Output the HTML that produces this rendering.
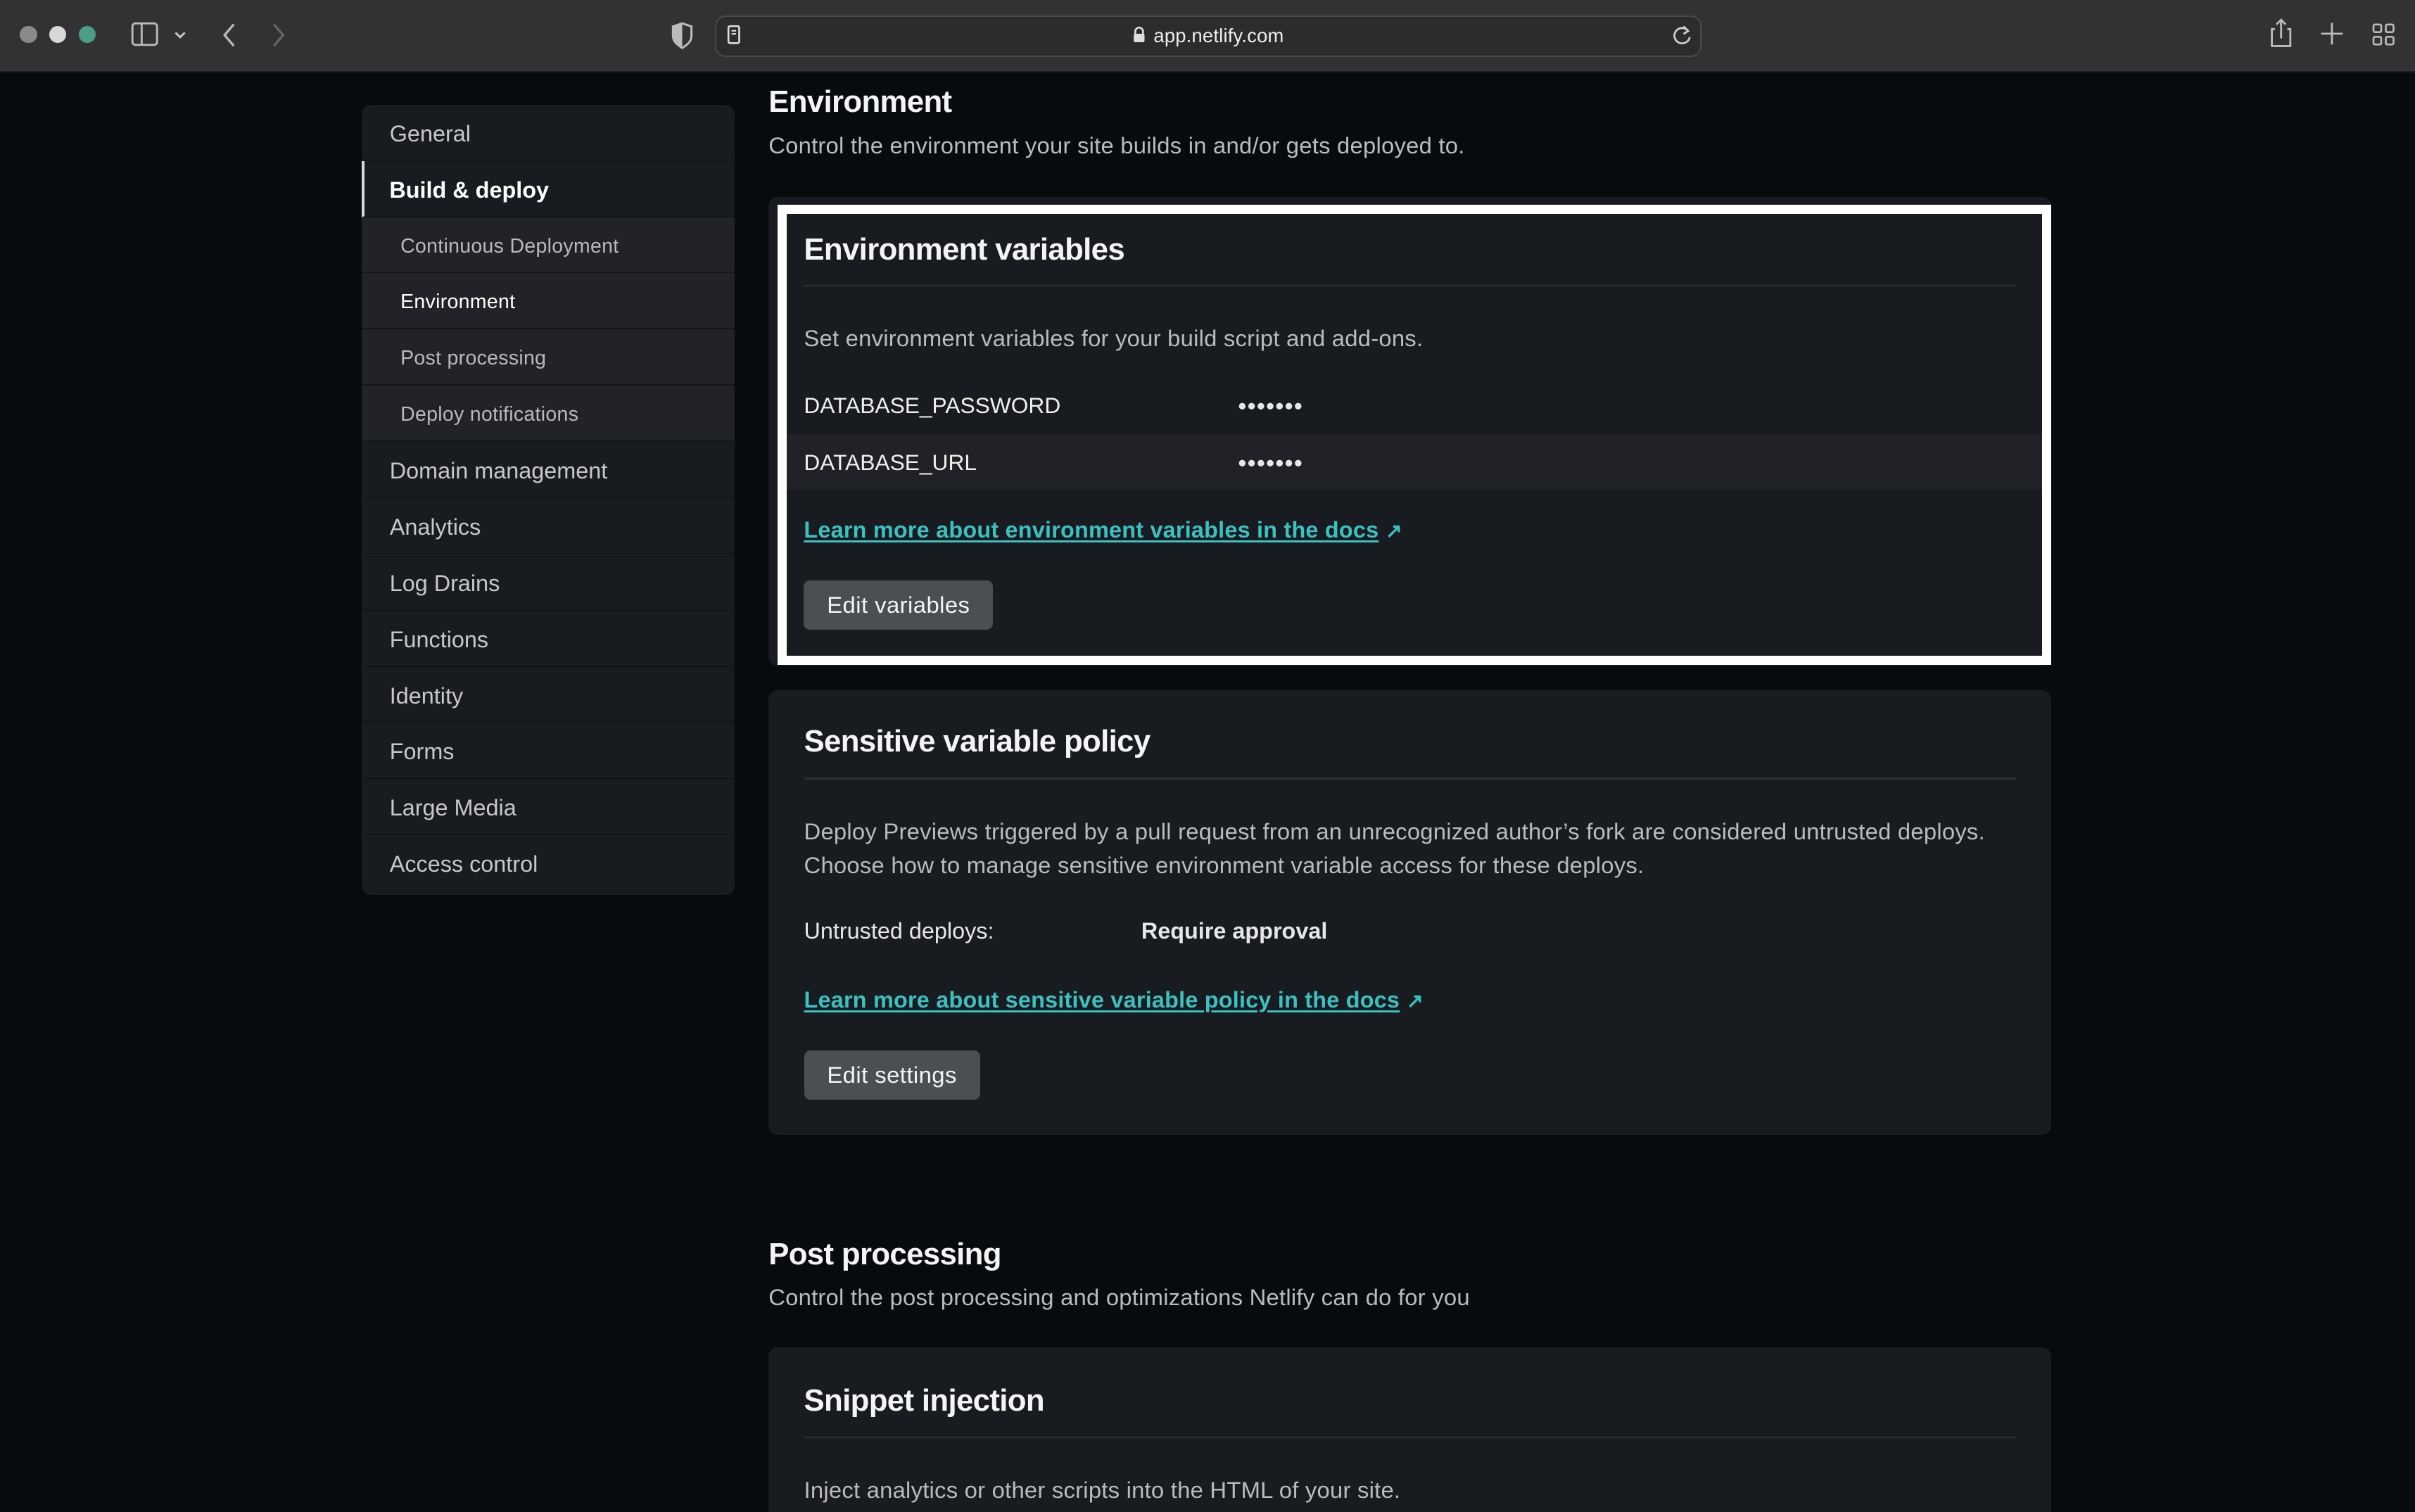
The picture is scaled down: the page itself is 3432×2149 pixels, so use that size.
<!DOCTYPE html>
<html><head><meta charset="utf-8"><style>
html,body{margin:0;padding:0;background:#070b0e;overflow:hidden;width:3432px;height:2149px}
#w{zoom:2.18878;width:1568px;height:982px;position:relative;font-family:"Liberation Sans",Arial,sans-serif;color:#e6e7e8;letter-spacing:0}
.abs{position:absolute}
.tb{left:0;top:0;width:1568px;height:46px;background:#323235;border-bottom:1px solid #1d1d1f}
.dot{width:11px;height:11px;border-radius:50%;top:17px}
.side{left:235px;top:68px;width:242px;height:513px;background:#181b20;border-radius:6px;overflow:hidden}
.it{height:36.5px;line-height:38px;padding-left:18px;font-size:14.8px;color:#c6c8ca;border-bottom:1px solid #12151a;box-sizing:border-box}
.sub{background:#212328;padding-left:25px;font-size:13px;color:#b8babd;letter-spacing:0.15px}
.card{left:499px;width:833px;background:#181b20;border-radius:6px}
h2{margin:0;font-size:20px;font-weight:bold;color:#f3f4f5;letter-spacing:-0.3px}
.p{font-size:15px;color:#b9bbbe;letter-spacing:0.1px}
.link{color:#3cc1c1;font-weight:bold;font-size:14.8px;text-decoration:underline;text-underline-offset:2px;letter-spacing:0.1px}
.btn{background:#4a4f53;border-radius:4px;color:#f3f4f5;font-size:15px;padding:0 15px;height:32px;line-height:32px;letter-spacing:0.2px}
.hr{height:1px;background:#2d3035}
</style></head><body><div id="w">
<div class="abs tb">
<div class="abs dot" style="left:13px;background:#8a8a8d"></div>
<div class="abs dot" style="left:32px;background:#d8d8d6"></div>
<div class="abs dot" style="left:51px;background:#4c9e89"></div>
<svg class="abs" style="left:85px;top:14px" width="40" height="18"><rect x="1" y="1" width="16" height="14" rx="2" fill="none" stroke="#bbb" stroke-width="1.3"/><line x1="7" y1="1" x2="7" y2="15" stroke="#bbb" stroke-width="1.3"/><path d="M29 7l3 3 3-3" stroke="#ccc" fill="none" stroke-width="1.3"/></svg>
<svg class="abs" style="left:140px;top:13px" width="50" height="20"><path d="M12 3l-6 7 6 7" stroke="#bbb" fill="none" stroke-width="1.5"/><path d="M38 3l6 7-6 7" stroke="#666" fill="none" stroke-width="1.5"/></svg>
<svg class="abs" style="left:435px;top:14px" width="16" height="18"><path d="M8 1L2 3v6c0 4 3 6 6 8 3-2 6-4 6-8V3z" fill="none" stroke="#bbb" stroke-width="1.4"/><path d="M8 1v16c-3-2-6-4-6-8V3z" fill="#bbb"/></svg>
<div class="abs" style="left:464px;top:10px;width:639px;height:25px;border:1px solid #4a4a4d;border-radius:7px;background:#2c2c2f"></div>
<svg class="abs" style="left:472px;top:16px" width="10" height="13"><rect x="1" y="1" width="7" height="11" rx="1" fill="none" stroke="#ddd" stroke-width="1.2"/><line x1="3" y1="4" x2="6" y2="4" stroke="#ddd"/><line x1="3" y1="6" x2="6" y2="6" stroke="#ddd"/></svg>
<svg class="abs" style="left:735px;top:17px" width="9" height="11"><path d="M2 5V3.5a2.5 2.5 0 0 1 5 0V5" fill="none" stroke="#ddd" stroke-width="1.2"/><rect x="1" y="5" width="7" height="5.5" rx="1" fill="#ddd"/></svg>
<div class="abs" style="left:749px;top:16px;font-size:12.5px;color:#eee;letter-spacing:0.1px">app.netlify.com</div>
<svg class="abs" style="left:1085px;top:15px" width="14" height="15"><path d="M11 5A5 5 0 1 0 12 9" fill="none" stroke="#ccc" stroke-width="1.3"/><path d="M8 2l3 3-3 2" fill="none" stroke="#ccc" stroke-width="1.3"/></svg>
<svg class="abs" style="left:1472px;top:12px" width="90" height="20"><path d="M5 7H3v11h12V7h-2M9 13V1M6 4l3-3 3 3" fill="none" stroke="#bbb" stroke-width="1.3"/><path d="M42 3v14M35 10h14" stroke="#bbb" stroke-width="1.3"/><g fill="none" stroke="#bbb" stroke-width="1.2"><rect x="69" y="4" width="5" height="5" rx="1"/><rect x="77" y="4" width="5" height="5" rx="1"/><rect x="69" y="12" width="5" height="5" rx="1"/><rect x="77" y="12" width="5" height="5" rx="1"/></g></svg>
</div>

<div class="abs side">
<div class="it">General</div>
<div class="it" style="color:#fff;font-weight:bold;border-left:2px solid #d8d8d6;padding-left:16px">Build &amp; deploy</div>
<div class="it sub">Continuous Deployment</div>
<div class="it sub" style="color:#fff">Environment</div>
<div class="it sub">Post processing</div>
<div class="it sub">Deploy notifications</div>
<div class="it">Domain management</div>
<div class="it">Analytics</div>
<div class="it">Log Drains</div>
<div class="it">Functions</div>
<div class="it">Identity</div>
<div class="it">Forms</div>
<div class="it">Large Media</div>
<div class="it" style="border:0">Access control</div>
</div>

<h2 class="abs" style="left:499px;top:55px">Environment</h2>
<div class="abs p" style="left:499px;top:86px">Control the environment your site builds in and/or gets deployed to.</div>

<div class="abs card" style="top:128px;height:304px"></div>
<div class="abs" style="left:505px;top:133px;width:815px;height:287px;border:6px solid #fff;background:#181b20">
<h2 class="abs" style="left:11px;top:12px">Environment variables</h2>
<div class="abs hr" style="left:11px;top:46px;width:787px"></div>
<div class="abs p" style="left:11px;top:72px">Set environment variables for your build script and add-ons.</div>
<div class="abs" style="left:11px;top:116px;font-size:14.5px;color:#f0f0f0">DATABASE_PASSWORD</div>
<div class="abs" style="left:293px;top:116px;font-size:15px;font-weight:bold;letter-spacing:0.8px">•••••••</div>
<div class="abs" style="left:0;top:143px;width:815px;height:36px;background:#202227"></div>
<div class="abs" style="left:11px;top:153px;font-size:14.5px;color:#f0f0f0">DATABASE_URL</div>
<div class="abs" style="left:293px;top:153px;font-size:15px;font-weight:bold;letter-spacing:0.8px">•••••••</div>
<div class="abs" style="left:11px;top:196px"><span class="link">Learn more about environment variables in the docs</span> <span style="color:#3cc1c1;font-size:13px;font-weight:bold">↗</span></div>
<div class="abs btn" style="left:11px;top:238px">Edit variables</div>
</div>

<div class="abs card" style="top:448px;height:289px">
<h2 class="abs" style="left:23px;top:22px">Sensitive variable policy</h2>
<div class="abs hr" style="left:23px;top:57px;width:787px"></div>
<div class="abs p" style="left:23px;top:81px;line-height:22px;width:810px">Deploy Previews triggered by a pull request from an unrecognized author’s fork are considered untrusted deploys.<br>Choose how to manage sensitive environment variable access for these deploys.</div>
<div class="abs" style="left:23px;top:148px;font-size:14.8px">Untrusted deploys:</div>
<div class="abs" style="left:242px;top:148px;font-size:14.8px;font-weight:bold">Require approval</div>
<div class="abs" style="left:23px;top:192px"><span class="link">Learn more about sensitive variable policy in the docs</span> <span style="color:#3cc1c1;font-size:13px;font-weight:bold">↗</span></div>
<div class="abs btn" style="left:23px;top:234px">Edit settings</div>
</div>

<h2 class="abs" style="left:499px;top:803px">Post processing</h2>
<div class="abs p" style="left:499px;top:834px">Control the post processing and optimizations Netlify can do for you</div>
<div class="abs card" style="top:875px;height:120px">
<h2 class="abs" style="left:23px;top:23px">Snippet injection</h2>
<div class="abs hr" style="left:23px;top:58px;width:787px"></div>
<div class="abs p" style="left:23px;top:84px">Inject analytics or other scripts into the HTML of your site.</div>
</div>
</div></body></html>
